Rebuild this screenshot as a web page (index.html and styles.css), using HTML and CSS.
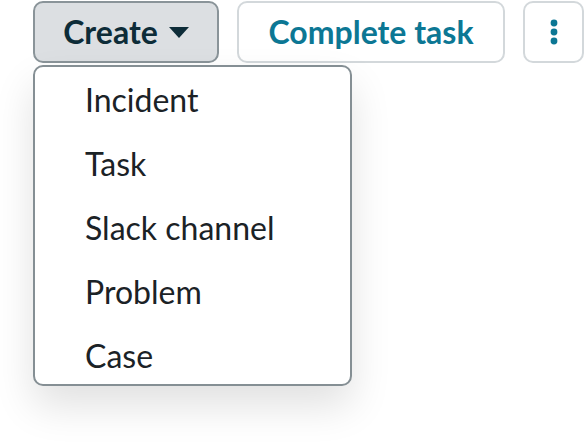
FILE: index.html
```html
<!DOCTYPE html>
<html>
<head>
<meta charset="utf-8">
<link rel="stylesheet" href="styles.css">
</head>
<body>
<div class="page">
  <div class="toolbar">
    <div class="dropdown">
      <button class="btn btn-create">Create <span class="caret"></span></button>
      <ul class="menu">
        <li class="menu-item">Incident</li>
        <li class="menu-item">Task</li>
        <li class="menu-item">Slack channel</li>
        <li class="menu-item">Problem</li>
        <li class="menu-item">Case</li>
      </ul>
    </div>
    <button class="btn btn-complete">Complete task</button>
    <button class="btn btn-more" aria-label="More">
      <svg width="8" height="26" viewBox="0 0 8 26"><circle cx="4" cy="4" r="3.4" fill="#0c7794"/><circle cx="4" cy="13" r="3.4" fill="#0c7794"/><circle cx="4" cy="22" r="3.4" fill="#0c7794"/></svg>
    </button>
  </div>
</div>
</body>
</html>
```
FILE: styles.css
```css
html, body {
  margin: 0;
  padding: 0;
  background: #ffffff;
  font-family: Lato, "Open Sans", sans-serif;
}
.page {
  min-height: 442px;
}
.toolbar {
  display: flex;
  align-items: flex-start;
  gap: 18px;
  padding: 1px 0 0 33px;
}
.dropdown {
  position: relative;
  z-index: 2;
}
.btn {
  box-sizing: border-box;
  height: 62px;
  border-radius: 10px;
  font-family: Lato, sans-serif;
  font-size: 32px;
  font-weight: 700;
  display: flex;
  align-items: center;
  justify-content: center;
  padding: 0;
  cursor: pointer;
}
.btn-create {
  width: 186px;
  background: #dcdfe2;
  border: 2px solid #8a9499;
  color: #0d2c38;
  gap: 11px;
  padding-bottom: 2px;
}
.caret {
  width: 0;
  height: 0;
  border-left: 10px solid transparent;
  border-right: 10px solid transparent;
  border-top: 11px solid #0d2c38;
  margin-top: 2px;
}
.btn-complete {
  width: 268px;
  background: #ffffff;
  border: 2px solid #d3d8db;
  color: #0c7794;
  padding-bottom: 2px;
}
.btn-more {
  width: 61px;
  background: #ffffff;
  border: 2px solid #d3d8db;
}
.menu {
  position: absolute;
  left: 0;
  top: 64px;
  box-sizing: border-box;
  width: 319px;
  height: 321px;
  overflow: hidden;
  margin: 0;
  padding: 0;
  list-style: none;
  background: #ffffff;
  border: 2px solid #858f94;
  border-radius: 10px;
  box-shadow: 0 20px 40px rgba(0, 0, 0, 0.12);
}
.menu-item {
  height: 64px;
  display: flex;
  align-items: center;
  padding-left: 50px;
  font-size: 32px;
  font-weight: 400;
  color: #1b2226;
}
```
